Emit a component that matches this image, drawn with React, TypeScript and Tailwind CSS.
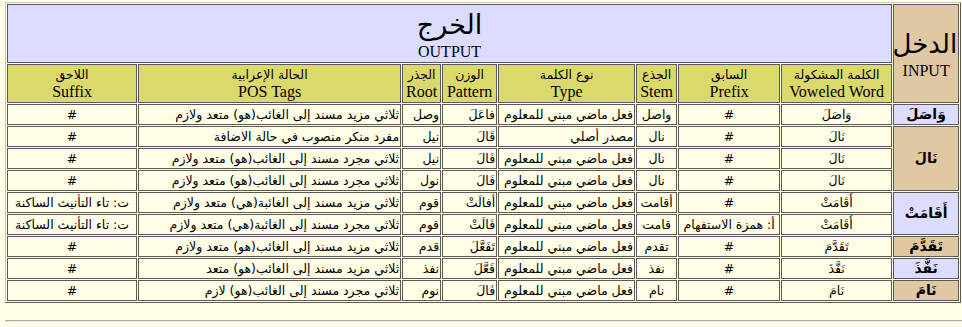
import React from 'react';

interface Row {
  voweled: string;
  prefix: string;
  stem: string;
  type: string;
  pattern: string;
  root: string;
  pos: string;
  suffix: string;
}

interface Group {
  word: string;
  tone: 'blue' | 'tan';
  rows: Row[];
}

const VERB = 'فعل ماضي مبني للمعلوم';
const TA = 'ت: تاء التأنيث الساكنة';

const groups: Group[] = [
  {
    word: 'وَاصَلَ',
    tone: 'blue',
    rows: [
      { voweled: 'وَاصَلَ', prefix: '#', stem: 'واصل', type: VERB, pattern: 'فاعَلَ', root: 'وصل', pos: 'ثلاثي مزيد مسند إلى الغائب(هو) متعد ولازم', suffix: '#' },
    ],
  },
  {
    word: 'نَالَ',
    tone: 'tan',
    rows: [
      { voweled: 'نَالَ', prefix: '#', stem: 'نال', type: 'مصدر أصلي', pattern: 'قَالَ', root: 'نيل', pos: 'مفرد منكر منصوب في حالة الاضافة', suffix: '#' },
      { voweled: 'نَالَ', prefix: '#', stem: 'نال', type: VERB, pattern: 'فَالَ', root: 'نيل', pos: 'ثلاثي مجرد مسند إلى الغائب(هو) متعد ولازم', suffix: '#' },
      { voweled: 'نَالَ', prefix: '#', stem: 'نال', type: VERB, pattern: 'فَالَ', root: 'نول', pos: 'ثلاثي مجرد مسند إلى الغائب(هو) متعد ولازم', suffix: '#' },
    ],
  },
  {
    word: 'أَقَامَتْ',
    tone: 'blue',
    rows: [
      { voweled: 'أَقَامَتْ', prefix: '#', stem: 'أقامت', type: VERB, pattern: 'أفالَتْ', root: 'قوم', pos: 'ثلاثي مزيد مسند إلى الغائبة(هي) متعد ولازم', suffix: TA },
      { voweled: 'أَقَامَتْ', prefix: 'أ: همزة الاستفهام', stem: 'قامت', type: VERB, pattern: 'فَالَتْ', root: 'قوم', pos: 'ثلاثي مجرد مسند إلى الغائبة(هي) متعد ولازم', suffix: TA },
    ],
  },
  {
    word: 'تَقَدَّمَ',
    tone: 'tan',
    rows: [
      { voweled: 'تَقَدَّمَ', prefix: '#', stem: 'تقدم', type: VERB, pattern: 'تَفَعَّلَ', root: 'قدم', pos: 'ثلاثي مزيد مسند إلى الغائب(هو) متعد ولازم', suffix: '#' },
    ],
  },
  {
    word: 'نَفَّذَ',
    tone: 'blue',
    rows: [
      { voweled: 'نَفَّذَ', prefix: '#', stem: 'نفذ', type: VERB, pattern: 'فَعَّلَ', root: 'نفذ', pos: 'ثلاثي مزيد مسند إلى الغائب(هو) متعد', suffix: '#' },
    ],
  },
  {
    word: 'نَامَ',
    tone: 'tan',
    rows: [
      { voweled: 'نَامَ', prefix: '#', stem: 'نام', type: VERB, pattern: 'فَالَ', root: 'نوم', pos: 'ثلاثي مجرد مسند إلى الغائب(هو) لازم', suffix: '#' },
    ],
  },
];

const headers = [
  { ar: 'الكلمة المشكولة', en: 'Voweled Word' },
  { ar: 'السابق', en: 'Prefix' },
  { ar: 'الجذع', en: 'Stem' },
  { ar: 'نوع الكلمة', en: 'Type' },
  { ar: 'الوزن', en: 'Pattern' },
  { ar: 'الجذر', en: 'Root' },
  { ar: 'الحالة الإعرابية', en: 'POS Tags' },
  { ar: 'اللاحق', en: 'Suffix' },
];

const cell = 'border border-[#5a5a5a] p-px align-middle';
const arabic = "font-['DejaVu_Sans',sans-serif] text-[12.5px] leading-[17px]";

export default function App() {
  return (
    <div className="min-h-screen bg-[#fffde6] pt-[2px] pl-[5px] font-['Liberation_Serif','DejaVu_Sans',serif] leading-[18px] text-black">
      <table
        dir="rtl"
        className="w-[956px] table-fixed border-separate border-spacing-[1px] border border-t-[#c9c9c0] border-l-[#c9c9c0] border-r-[#5a5a5a] border-b-[#5a5a5a]"
      >
        <colgroup>
          <col className="w-[66px]" />
          <col className="w-[111px]" />
          <col className="w-[102px]" />
          <col className="w-[41px]" />
          <col className="w-[137px]" />
          <col className="w-[55px]" />
          <col className="w-[39px]" />
          <col className="w-[263px]" />
          <col className="w-[130px]" />
        </colgroup>
        <thead>
          <tr className="h-[59px]">
            <th rowSpan={2} className={`${cell} bg-[#e0c8a2] font-normal`}>
              <div className="font-['DejaVu_Sans',sans-serif] text-[26px] leading-[34px]">الدخل</div>
              <div className="text-[16px] leading-[20px]">INPUT</div>
            </th>
            <th colSpan={8} className={`${cell} bg-[#dcdcff] font-normal`}>
              <div className="font-['DejaVu_Sans',sans-serif] text-[27px] leading-[36px]">الخرج</div>
              <div className="text-[16px] leading-[18px]">OUTPUT</div>
            </th>
          </tr>
          <tr className="h-[39px]">
            {headers.map(h => (
              <th key={h.en} className={`${cell} bg-[#dbd96c] font-normal`}>
                <div className={arabic}>{h.ar}</div>
                <div className="text-[16px] leading-[18px] whitespace-nowrap">{h.en}</div>
              </th>
            ))}
          </tr>
        </thead>
        <tbody>
          {groups.map(g =>
            g.rows.map((r, i) => (
              <tr key={`${g.word}-${i}`} className="h-[21px]">
                {i === 0 && (
                  <td
                    rowSpan={g.rows.length}
                    className={`${cell} text-center font-bold font-['DejaVu_Sans',sans-serif] text-[14px] leading-[17px] ${g.tone === 'blue' ? 'bg-[#dcdcff]' : 'bg-[#e0c8a2]'}`}
                  >
                    {g.word}
                  </td>
                )}
                <td className={`${cell} ${arabic} bg-[#fffde6] text-center`}>{r.voweled}</td>
                <td className={`${cell} ${arabic} bg-[#fffde6] text-center`}>{r.prefix}</td>
                <td className={`${cell} ${arabic} bg-[#fffde6] text-center`}>{r.stem}</td>
                <td className={`${cell} ${arabic} bg-[#fffde6] text-right whitespace-nowrap`}>{r.type}</td>
                <td className={`${cell} ${arabic} bg-[#fffde6] text-right`}>{r.pattern}</td>
                <td className={`${cell} ${arabic} bg-[#fffde6] text-right`}>{r.root}</td>
                <td className={`${cell} ${arabic} bg-[#fffde6] text-right whitespace-nowrap`}>{r.pos}</td>
                <td className={`${cell} ${arabic} bg-[#fffde6] text-center whitespace-nowrap`}>{r.suffix}</td>
              </tr>
            ))
          )}
        </tbody>
      </table>
      <div className="mt-[17px] h-[2px] border-t border-t-[#a8a8a0] border-b border-b-[#eeeee0]" />
    </div>
  );
}
